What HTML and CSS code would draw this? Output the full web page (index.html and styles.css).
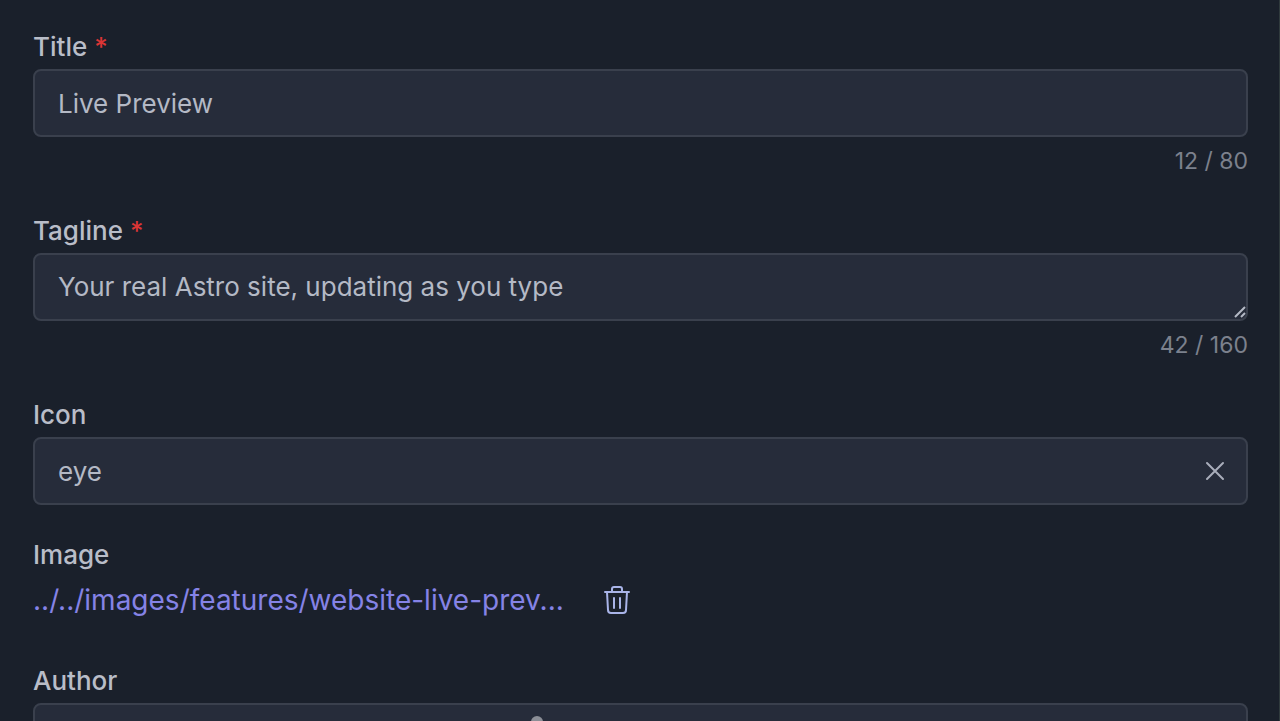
FILE: index.html
```
<!DOCTYPE html>
<html lang="en">
  <head>
    <meta charset="UTF-8" />
    <meta name="viewport" content="width=device-width, initial-scale=1" />
    <title>Live Preview</title>
    <link rel="stylesheet" href="styles.css">
  </head>
  <body>
    <form class="editor">
      <div class="field">
        <label class="label" for="title">Title <span class="required">*</span></label>
        <input class="control" id="title" type="text" value="Live Preview" maxlength="80" required />
        <div class="counter">12 / 80</div>
      </div>

      <div class="field">
        <label class="label" for="tagline">Tagline <span class="required">*</span></label>
        <div class="control-wrap">
          <textarea class="control" id="tagline" rows="1" maxlength="160" required>Your real Astro site, updating as you type</textarea>
          <svg class="grip" viewBox="0 0 14 14" aria-hidden="true">
            <path d="M2 12 12 2M8 12l4-4" />
          </svg>
        </div>
        <div class="counter">42 / 160</div>
      </div>

      <div class="field">
        <label class="label" for="icon">Icon</label>
        <div class="control-wrap">
          <input class="control" id="icon" type="text" value="eye" />
          <button class="clear" type="button" aria-label="Clear icon">
            <svg viewBox="0 0 20 20"><path d="M2 2l16 16M18 2 2 18" /></svg>
          </button>
        </div>
      </div>

      <div class="field">
        <div class="label">Image</div>
        <div class="file">
          <a class="file-link" href="#">../../images/features/website-live-prev...</a>
          <button class="remove" type="button" aria-label="Remove image">
            <svg viewBox="0 0 26 30">
              <path d="M1 7h24M8 7V4q0-2 2-2h6q2 0 2 2v3M3 7l1 18q0 3 3 3h12q3 0 3-3L23 7M10 13v10M16 13v10" />
            </svg>
          </button>
        </div>
      </div>

      <div class="field">
        <label class="label" for="author">Author</label>
        <div class="control-wrap">
          <input class="control" id="author" type="text" />
          <span class="pointer"></span>
        </div>
      </div>
    </form>
  </body>
</html>
```
FILE: styles.css
```
* {
  box-sizing: border-box;
}
html,
body {
  height: 100%;
}
body {
  margin: 0;
  overflow: hidden;
  background: #1a202b;
  color: #b9bdc8;
  font-family: Inter, "Liberation Sans", sans-serif;
  font-size: 26px;
}
.editor {
  display: flex;
  flex-direction: column;
  min-height: 100%;
  padding: 29px 31px 0 33px;
  border-right: 1px solid #303a3d;
}
.field {
  display: flex;
  flex-direction: column;
  margin-bottom: 32px;
}
.label {
  height: 40px;
  line-height: 36px;
  font-weight: 500;
}
.required {
  color: #dc3535;
}
.control-wrap {
  display: flex;
  position: relative;
}
.control {
  display: block;
  width: 100%;
  height: 68px;
  margin: 0;
  padding: 0 23px;
  border: 2px solid #3a404d;
  border-radius: 8px;
  outline: none;
  background: #262c3a;
  color: #b4b9c5;
  font: inherit;
}
textarea.control {
  padding: 14px 23px;
  line-height: 36px;
  resize: none;
  overflow: hidden;
}
.counter {
  height: 44px;
  padding-top: 8px;
  line-height: 32px;
  font-size: 23px;
  text-align: right;
  color: #7c818d;
}
.grip {
  position: absolute;
  right: 1px;
  bottom: 2px;
  width: 14px;
  height: 14px;
  fill: none;
  stroke: #b4b9c5;
  stroke-width: 2;
}
/* buttons */
button {
  display: flex;
  padding: 0;
  border: 0;
  background: none;
  cursor: pointer;
}
button svg {
  fill: none;
  stroke: currentColor;
  stroke-width: 2;
  stroke-linecap: round;
  stroke-linejoin: round;
}
.clear {
  position: absolute;
  top: 24px;
  right: 23px;
  color: #a9aebb;
}
.clear svg {
  width: 20px;
  height: 20px;
}
/* image path */
.file {
  display: flex;
  align-items: center;
  gap: 40px;
  height: 46px;
  margin-bottom: 8px;
}
.file-link {
  font-size: 28px;
  line-height: 40px;
  color: #8583e6;
  text-decoration: none;
}
.remove {
  color: #a9b4e8;
}
.remove svg {
  width: 26px;
  height: 30px;
}
.pointer {
  position: absolute;
  top: 13px;
  left: 41%;
  width: 12px;
  height: 12px;
  border-radius: 50%;
  background: #8b8e96;
}
```
